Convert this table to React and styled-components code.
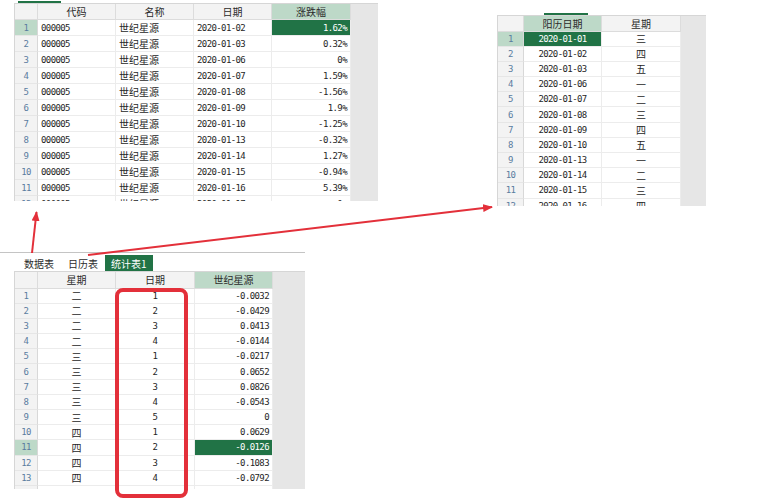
import React from 'react';
import styled, { createGlobalStyle } from 'styled-components';

const GlobalStyle = createGlobalStyle`
    html, body {
        margin: 0;
        padding: 0;
        background: #ffffff;
    }
    body {
        font-family: 'Noto Sans CJK SC', 'Noto Sans', sans-serif;
        color: #333333;
    }
`

const GREEN = '#217346';
const LIGHT_GREEN = '#bdd9c8';
const RED = '#e3303a';
const MONO = "'DejaVu Sans Mono', 'Liberation Mono', 'Noto Sans CJK SC', monospace";

const Canvas = styled.div`
    position: relative;
    width: 758px;
    height: 499px;
    overflow: hidden;
    background: #ffffff;
`

const TopRow = styled.div`
    display: flex;
    align-items: flex-start;
    height: 252px;
    padding-left: 14px;
    gap: 119px;
`

const Frame = styled.div`
    display: flex;
    flex-direction: column;
    width: ${p => p.$width}px;
    margin-top: ${p => p.$top || 0}px;
`

const TopStrip = styled.div`
    height: 3px;
`

const Marker = styled.div`
    margin-left: ${p => p.$left}px;
    width: ${p => p.$width}px;
    height: 2px;
    margin-top: 1px;
    background: ${GREEN};
`

const SheetBody = styled.div`
    display: flex;
    height: ${p => p.$height}px;
    overflow: hidden;
    border-top: 1px solid #d6d6d6;
    border-left: 1px solid #d6d6d6;
`

const Grid = styled.div`
    display: grid;
    grid-template-columns: ${p => p.$cols};
    grid-template-rows: ${p => p.$headH}px;
    grid-auto-rows: ${p => p.$rowH}px;
    align-content: start;
    background: #ffffff;
`

const Gutter = styled.div`
    flex: 1;
    background: #e6e6e6;
`

const HeadCell = styled.div`
    display: flex;
    align-items: center;
    justify-content: center;
    font-size: 10px;
    color: #2b2b2b;
    background: ${p => (p.$active ? LIGHT_GREEN : '#f3f3f3')};
    border-right: 1px solid #dcdcdc;
    border-bottom: 1px solid #dcdcdc;
`

const RowNum = styled.div`
    display: flex;
    align-items: center;
    justify-content: center;
    font-family: ${MONO};
    font-size: 9px;
    letter-spacing: -0.6px;
    color: #5a7c9f;
    background: ${p => (p.$active ? LIGHT_GREEN : '#f3f3f3')};
    border-right: 1px solid #d8d8d8;
    border-bottom: 1px solid #e6e6e6;
`

const Cell = styled.div`
    display: flex;
    align-items: center;
    justify-content: ${p => (p.$align === 'right' ? 'flex-end' : p.$align === 'center' ? 'center' : 'flex-start')};
    padding: 0 3px;
    white-space: nowrap;
    font-family: ${p => (p.$mono ? MONO : "'Noto Sans CJK SC', sans-serif")};
    font-size: ${p => (p.$mono ? 9 : 10)}px;
    letter-spacing: ${p => (p.$mono ? '-0.6px' : '0')};
    color: ${p => (p.$sel ? '#ffffff' : '#262626')};
    background: ${p => (p.$sel ? GREEN : '#ffffff')};
    border-right: 1px solid #ececec;
    border-bottom: 1px solid #ececec;
`

const Bottom = styled.div`
    display: flex;
    flex-direction: column;
`

const TabBar = styled.div`
    display: flex;
    align-items: flex-start;
    width: 305px;
    height: 19px;
    padding: 2px 0 0 17px;
    box-sizing: border-box;
    border-top: 1px solid #c4c4c4;
`

const Tab = styled.div`
    height: 16px;
    display: flex;
    align-items: center;
    padding: 0 ${p => (p.$active ? 6 : 7)}px;
    font-size: 10px;
    color: ${p => (p.$active ? '#ffffff' : '#2b2b2b')};
    background: ${p => (p.$active ? GREEN : 'transparent')};
`

const BottomFrame = styled(Frame)`
    margin-left: 14px;
`

const Overlay = styled.svg`
    position: absolute;
    left: 0;
    top: 0;
    pointer-events: none;
`

function SheetGrid({ cols, headH, rowH, data, activeRow, activeCol, numbered })
{
    const template = [`${cols.numW}px`, ...cols.map(c => `${c.w}px`)].join(' ');
    return (
        <Grid $cols={template} $headH={headH} $rowH={rowH}>
            <HeadCell />
            {cols.map((c, i) => (
                <HeadCell key={c.label} $active={i === activeCol}>{c.label}</HeadCell>
            ))}
            {data.map((row, r) => (
                <React.Fragment key={r}>
                    <RowNum $active={r === activeRow}>{r < numbered ? r + 1 : ''}</RowNum>
                    {row.map((v, i) => (
                        <Cell
                            key={i}
                            $align={cols[i].align}
                            $mono={cols[i].mono}
                            $sel={r === activeRow && i === activeCol}
                        >
                            {v}
                        </Cell>
                    ))}
                </React.Fragment>
            ))}
        </Grid>
    )
}

function Sheet({ width, top, marker, height, gutter, ...grid })
{
    return (
        <Frame $width={width} $top={top}>
            <TopStrip>{marker && <Marker $left={marker[0]} $width={marker[1]} />}</TopStrip>
            <SheetBody $height={height}>
                <SheetGrid numbered={99} {...grid} />
                <Gutter style={{ minWidth: gutter }} />
            </SheetBody>
        </Frame>
    )
}

const stockCols = [
    { label: '代码', w: 78, align: 'left', mono: true },
    { label: '名称', w: 78, align: 'left' },
    { label: '日期', w: 78, align: 'left', mono: true },
    { label: '涨跌幅', w: 79, align: 'right', mono: true },
];
stockCols.numW = 23;

const stockData = [
    ['2020-01-02', '1.62%'],
    ['2020-01-03', '0.32%'],
    ['2020-01-06', '0%'],
    ['2020-01-07', '1.59%'],
    ['2020-01-08', '-1.56%'],
    ['2020-01-09', '1.9%'],
    ['2020-01-10', '-1.25%'],
    ['2020-01-13', '-0.32%'],
    ['2020-01-14', '1.27%'],
    ['2020-01-15', '-0.94%'],
    ['2020-01-16', '5.39%'],
    ['2020-01-17', '0%'],
].map(([d, p]) => ['000005', '世纪星源', d, p]);

const calCols = [
    { label: '阳历日期', w: 78, align: 'center', mono: true },
    { label: '星期', w: 79, align: 'center' },
];
calCols.numW = 26;

const calData = [
    ['2020-01-01', '三'],
    ['2020-01-02', '四'],
    ['2020-01-03', '五'],
    ['2020-01-06', '一'],
    ['2020-01-07', '二'],
    ['2020-01-08', '三'],
    ['2020-01-09', '四'],
    ['2020-01-10', '五'],
    ['2020-01-13', '一'],
    ['2020-01-14', '二'],
    ['2020-01-15', '三'],
    ['2020-01-16', '四'],
];

const statCols = [
    { label: '星期', w: 78, align: 'center' },
    { label: '日期', w: 79, align: 'center', mono: true },
    { label: '世纪星源', w: 78, align: 'right', mono: true },
];
statCols.numW = 23;

const statData = [
    ['二', '1', '-0.0032'],
    ['二', '2', '-0.0429'],
    ['二', '3', '0.0413'],
    ['二', '4', '-0.0144'],
    ['三', '1', '-0.0217'],
    ['三', '2', '0.0652'],
    ['三', '3', '0.0826'],
    ['三', '4', '-0.0543'],
    ['三', '5', '0'],
    ['四', '1', '0.0629'],
    ['四', '2', '-0.0126'],
    ['四', '3', '-0.1083'],
    ['四', '4', '-0.0792'],
    ['', '', ''],
];

function Arrows()
{
    return (
        <Overlay width="758" height="499" viewBox="0 0 758 499">
            <defs>
                <marker id="head" markerWidth="10" markerHeight="8" refX="9" refY="4" orient="auto" markerUnits="userSpaceOnUse">
                    <path d="M0 0 L10 4 L0 8 Z" fill={RED} />
                </marker>
            </defs>
            <line x1="32" y1="253" x2="36.5" y2="212" stroke={RED} strokeWidth="2" markerEnd="url(#head)" />
            <line x1="88" y1="255" x2="492" y2="207" stroke={RED} strokeWidth="2" markerEnd="url(#head)" />
            <rect x="117" y="290" width="69" height="206" rx="6" ry="6" fill="none" stroke={RED} strokeWidth="4" />
        </Overlay>
    )
}

export default function App()
{
    return (
        <Canvas>
            <GlobalStyle />
            <TopRow>
                <Sheet
                    width={364}
                    marker={[4, 43]}
                    height={197}
                    cols={stockCols}
                    headH={16}
                    rowH={16}
                    gutter={28}
                    data={stockData}
                    activeRow={0}
                    activeCol={3}
                />
                <Sheet
                    width={209}
                    top={12}
                    marker={[47, 44]}
                    height={190}
                    cols={calCols}
                    headH={15.5}
                    rowH={15.2}
                    gutter={26}
                    data={calData}
                    activeRow={0}
                    activeCol={0}
                />
            </TopRow>
            <Bottom>
                <TabBar>
                    <Tab>数据表</Tab>
                    <Tab>日历表</Tab>
                    <Tab $active>统计表1</Tab>
                </TabBar>
                <BottomFrame $width={291}>
                    <SheetBody $height={217}>
                        <SheetGrid
                            cols={statCols}
                            headH={16.5}
                            rowH={15.2}
                            data={statData}
                            activeRow={10}
                            activeCol={2}
                            numbered={13}
                        />
                        <Gutter style={{ minWidth: 33 }} />
                    </SheetBody>
                </BottomFrame>
            </Bottom>
            <Arrows />
        </Canvas>
    )
}
